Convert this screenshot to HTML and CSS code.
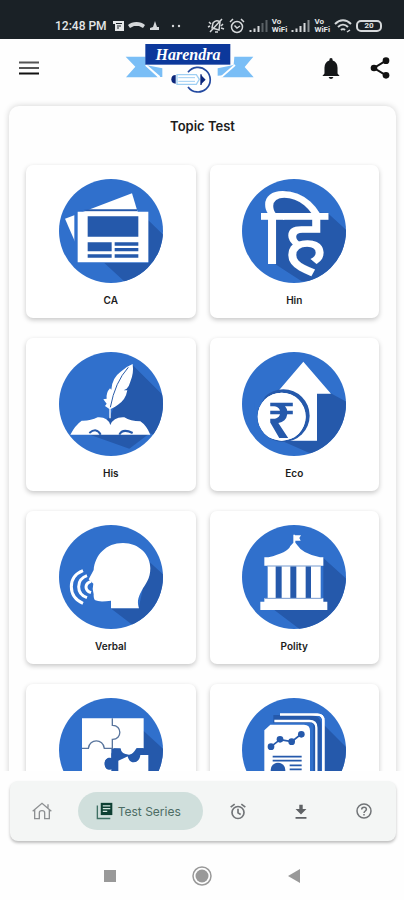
FILE: index.html
```html
<!DOCTYPE html>
<html lang="en">
<head>
<meta charset="utf-8">
<meta name="viewport" content="width=device-width, initial-scale=1">
<title>Topic Test</title>
<link rel="stylesheet" href="styles.css">
</head>
<body>
<div class="statusbar">
  <span class="time">12:48 PM</span>
  <svg class="status-left" viewBox="0 0 74 14" width="74" height="14" aria-hidden="true">
    <path d="M1 2h11v10H3V5H1z" fill="#e4e6e7"/><path d="M4 4.500h6M5 7h4M5 9h2" stroke="#1a2126" stroke-width="1"/>
    <path d="M16 6c4-4 13-4 17 0l-2 3-4-2h-5l-4 2z" fill="#d5d8da"/>
    <path d="M43 2l2 6h2v3h-9V9l3-1z" fill="#d5d8da"/>
    <circle cx="61" cy="7" r="1.200" fill="#d5d8da"/><circle cx="67" cy="7" r="1.200" fill="#d5d8da"/>
  </svg>
  <div class="status-right">
    <svg viewBox="0 0 18 16" width="18" height="16" aria-hidden="true" fill="none" stroke="#d5d8da" stroke-width="1.500"><path d="M5 10l1-5q3-4 7-1l-1 8zM8 14h3M2 4l2 2M1 9l2-1M16 6l-2 2M17 11l-3-1M3 14L15 1"/></svg>
    <svg viewBox="0 0 16 16" width="16" height="16" aria-hidden="true" fill="none" stroke="#d5d8da" stroke-width="1.500"><circle cx="8" cy="9" r="5.500"/><path d="M1 4l3-3M15 4l-3-3M5.500 7.500L8 10l3-2"/></svg>
    <svg viewBox="0 0 19 14" width="19" height="14" aria-hidden="true" stroke="#d5d8da" stroke-width="2"><path d="M1.500 13v-2M5.500 13V9.500M9.500 13V7"/><path d="M13.500 13V4M17.500 13V1" stroke="#5b6266"/></svg>
    <span class="vo">Vo<br>WiFi</span>
    <svg viewBox="0 0 19 14" width="19" height="14" aria-hidden="true" stroke="#d5d8da" stroke-width="2"><path d="M1.500 13v-2M5.500 13V9.500M9.500 13V7M13.500 13V4"/><path d="M17.500 13V1" stroke="#8b9093"/></svg>
    <span class="vo">Vo<br>WiFi</span>
    <svg viewBox="0 0 18 14" width="18" height="14" aria-hidden="true" fill="none" stroke="#d5d8da" stroke-width="2"><path d="M1 5c5-5 11-5 16 0M4 8c3-3 7-3 10 0M7 11c1-1 3-1 4 0"/><path d="M13 13l3-2" stroke-width="1.500"/></svg>
    <span class="battery">20</span>
  </div>
</div>

<header class="appbar">
  <button class="icon-btn" aria-label="Menu">
    <svg viewBox="0 0 20 14" width="20" height="14"><path d="M0 1.500h20M0 7h20" stroke="#555" stroke-width="2"/><path d="M0 12.500h20" stroke="#111" stroke-width="2"/></svg>
  </button>
  <div class="logo">
    <svg viewBox="372 134 390 150" width="130" height="50" aria-hidden="true">
      <path d="M374 175h60v25l50 10v26h-10l-40-34 36 35h-95l28-32z" fill="#7abef6"/>
      <path d="M434 200l42 36" stroke="#fff" stroke-width="5"/>
      <path d="M757 175h-57l-2 25-48 10v22l20-1-9 6h97l-27-31z" fill="#7abef6"/>
      <path d="M702 200l-41 36" stroke="#fff" stroke-width="5"/>
      <rect x="433" y="137" width="255" height="62" fill="#0c389b"/>
      <path d="M561 222a37 37 0 1 1 0 44" fill="none" stroke="#2349a0" stroke-width="5"/>
      <path d="M598 228h4v32h-4z" fill="#0b267c"/>
      <path d="M600 230l14 14-14 14z" fill="#0b267c"/>
      <path d="M524 230q-13 0-13 13t13 13z" fill="#0b267c"/>
      <path d="M528 229h58l9 14-9 15h-58z" fill="#fff" stroke="#9fcff3" stroke-width="4"/>
      <path d="M532 238h50M532 249h50" stroke="#9fcff3" stroke-width="3"/>
      <text class="logo-text" x="561" y="184" text-anchor="middle">Harendra</text>
    </svg>
  </div>
  <div class="actions">
    <button class="icon-btn" aria-label="Notifications">
      <svg viewBox="360 173 52 64" width="18" height="22"><path d="M386 176q5 0 5 7 14 5 14 21v17l6 7h-50l6-7v-17q0-16 14-21 0-7 5-7zM379 231h14q-2 6-7 6t-7-6z" fill="#151719"/></svg>
    </button>
    <button class="icon-btn" aria-label="Share">
      <svg viewBox="504 172 60 66" width="20" height="22"><path d="M552 183l-36 22 36 22" fill="none" stroke="#111" stroke-width="6"/><g fill="#111"><circle cx="552" cy="183" r="10"/><circle cx="516" cy="205" r="10"/><circle cx="552" cy="227" r="10"/></g></svg>
    </button>
  </div>
</header>

<main class="content">
  <section class="panel">
    <h1>Topic Test</h1>
    <div class="grid">
      <a class="card" href="#ca">
        <svg class="pic" viewBox="176 236 312 312" aria-hidden="true">
          <path class="shade" d="M444 360l50 48v150H388l-76-70h132z"/>
          <path d="M194 355l201-76 18 60-187 90z" fill="#fff"/>
          <path d="M262 327h148v6H230z" fill="#2559ab"/>
          <path d="M226 333h8v100h-12v-88l-4-3 54-17z" fill="#3070cc"/>
          <path d="M232 334h212v152H232z" fill="#fff"/>
          <path d="M262 348h152v61H262zM262 426h72v27H262zM262 462h72v10H262zM343 426h71v10h-71zM343 443h71v10h-71zM343 462h71v10h-71z" fill="#2559ab"/>
        </svg>
        <span>CA</span>
      </a>
      <a class="card" href="#hin">
        <svg class="pic" viewBox="121 236 312 312" aria-hidden="true">
          <path class="shade" d="M205 335l10-50 40-15 85 66 38 2 60 55v150H300l-80-52z"/>
          <text class="hindi" x="277" y="492" text-anchor="middle" lang="hi">हि</text>
        </svg>
        <span>Hin</span>
      </a>
      <a class="card" href="#his">
        <svg class="pic" viewBox="117 66 312 312" aria-hidden="true">
          <path class="shade" d="M337 104l100 100v130l-47-25-62 47-118-42 60-55z"/>
          <path d="M268 265q0-15 0-28l-13-9 5-7-10-13 10-2q-2-18 10-31l4 4q2-35 27-53 16-16 37-24 4 28-7 53-4 15-11 21l-9 5 11 0q-5 29-28 43-10 8-22 13l0 28z" fill="#fff"/>
          <path d="M271 232q14-76 54-120" fill="none" stroke="#2a5ca9" stroke-width="3"/>
          <path d="M151 314q14-28 34-42 26 1 48-10 30-2 38 23 10-25 42-23 18 12 48 12 18 12 30 40z" fill="#fff"/>
          <path d="M208 309q22-18 34 5M298 314q10-20 40-5" fill="none" stroke="#2559ab" stroke-width="6"/>
        </svg>
        <span>His</span>
      </a>
      <a class="card" href="#eco">
        <svg class="pic" viewBox="121 66 312 312" aria-hidden="true">
          <path class="shade" d="M346 190h41l60 32v150H330l-90-40h106z"/>
          <path d="M305 95l83 96h-42v141H230V183z" fill="#fff"/>
          <circle cx="245" cy="257" r="79" fill="#2559ab"/><circle cx="240" cy="260" r="72" fill="#fff"/>
          <path d="M160 200h30l-22 40v40l20 36-30-6z" fill="#3070cc"/>
          <circle cx="240" cy="260" r="72" fill="#fff"/>
          <text class="rupee" x="239" y="323" text-anchor="middle">₹</text>
        </svg>
        <span>Eco</span>
      </a>
      <a class="card" href="#verbal">
        <svg class="pic" viewBox="117 61 312 312" aria-hidden="true">
          <path class="shade" d="M386 170l50 45v160h-80l-84-64h84z"/>
          <path d="M309 115c48 0 82 35 82 76 0 32-14 46-26 67-13 23-13 36-8 53h-84v-23q-35 5-47-1-6-4-5-18l-3-16 2-16-14-13 15-28c4-45 37-81 88-81z" fill="#fff"/>
          <g fill="none" stroke="#fff" stroke-width="9"><path d="M189 198q-35 14-35 48t35 50M201 213q-25 9-25 33t25 33M213 230q-15 5-15 17t15 17"/></g>
        </svg>
        <span>Verbal</span>
      </a>
      <a class="card" href="#polity">
        <svg class="pic" viewBox="121 61 312 312" aria-hidden="true">
          <path class="shade" d="M365 160l75 68v150H300l-82-62h147z"/>
          <path d="M188 183v-25h12q58-14 66-34l9-10V90h5v2h18l-5 8 4 8h-16v6l8 10q12 22 66 34h10v25h-8v98h8v10h12v25H176v-25h12v-10h10v-98z" fill="#fff"/>
          <path d="M222 185h18v95h-18zM266 185h18v95h-18zM312 185h16v95h-16z" fill="#2559ab"/>
          <path d="M197 184h160M190 281h172" stroke="#779bcf" stroke-width="3"/>
        </svg>
        <span>Polity</span>
      </a>
      <a class="card" href="#reasoning" aria-label="Reasoning">
        <svg class="pic" viewBox="176 71 312 312" aria-hidden="true">
          <path class="shade" d="M430 170l60 55v160H246V290l84-70z"/>
          <path d="M245 132h185v90h-20c0 25-45 25-49 2l-28-2v30c-10-5-20 4-20 16s8 22 20 16v99h-88z" fill="#fff"/>
          <path d="M354 388v-96-33l32-15c2 28 32 24 34-2h24v146z" fill="#fff"/>
          <path d="M336 132v21c30-1 30 43 0 42v27h-24c-3-30-45-30-48 0h-19" fill="none" stroke="#59759d" stroke-width="4"/>
          <path d="M333 238l8-16h20v17l-16 12v20c-2 20-32 19-32-3 0-14 9-18 20-17zM363 239c15 8 33 6 45-17h21v19h-12c-4 30-32 30-36 0z" fill="#2559ab"/>
        </svg>
      </a>
      <a class="card" href="#data" aria-label="Data">
        <svg class="pic" viewBox="121 71 312 312" aria-hidden="true">
          <path class="shade" d="M365 150l75 75v160h-75z"/>
          <path d="M235 121h112q18 0 18 18v250" fill="none" stroke="#fff" stroke-width="7"/>
          <path d="M215 134h110q22 0 22 20v230" fill="none" stroke="#2559ab" stroke-width="24"/>
          <path d="M235 121h112q18 0 18 18v250M218 140h105q21 0 21 20v230" fill="none" stroke="#fff" stroke-width="7"/>
          <path d="M188 388V168l18-17h101q18 0 18 18v219z" fill="#fff"/>
          <path d="M208 217l27-21 35 6 29-23" fill="none" stroke="#2559ab" stroke-width="5"/>
          <g fill="#2559ab"><circle cx="208" cy="217" r="10"/><circle cx="235" cy="195" r="10"/><circle cx="270" cy="202" r="10"/><circle cx="299" cy="180" r="10"/><circle cx="229" cy="287" r="22"/></g>
          <path d="M213 247h87M213 259h87M264 273h36M264 285h36" stroke="#2559ab" stroke-width="5"/>
        </svg>
      </a>
    </div>
  </section>
</main>

<nav class="tabbar" aria-label="Main">
  <button class="tab" aria-label="Home">
    <svg viewBox="96 384 60 52" width="20" height="18" fill="none" stroke="#8d9092" stroke-width="4"><path d="M98 411l28-24 28 24M104 407v26h14v-18q0-6 8-6t8 6v18h14v-26M144 400v-10"/></svg>
  </button>
  <button class="tab active" aria-current="page">
    <svg viewBox="286 384 50 52" width="17" height="18" aria-hidden="true"><path d="M300 386h34v36h-34z" fill="#0d3f32"/><path d="M290 394v38h38" fill="none" stroke="#3f7064" stroke-width="4"/><path d="M306 395h22M306 403h22M306 411h13" stroke="#d2e4de" stroke-width="4"/></svg>
    <span>Test Series</span>
  </button>
  <button class="tab" aria-label="Reminders">
    <svg viewBox="86 384 48 50" width="16" height="17" fill="none" stroke="#717477" stroke-width="5"><circle cx="110" cy="412" r="18"/><path d="M88 396l12-9M132 396l-12-9M110 401v12l8 5"/></svg>
  </button>
  <button class="tab" aria-label="Downloads">
    <svg viewBox="280 386 34 44" width="12" height="15" fill="#5f6265"><path d="M292 388h10v13h11l-16 16-16-16h11zM281 424h32v5h-32z"/></svg>
  </button>
  <button class="tab" aria-label="Help">
    <svg viewBox="0 0 16 16" width="16" height="16" fill="none" stroke="#717477" stroke-width="1.500"><circle cx="8" cy="8" r="7"/><path d="M5.700 6.500c0-3.200 4.700-3 4.700-.2C10.400 8 8 8 8 10M8 11v1.500"/></svg>
  </button>
</nav>

<div class="sysnav">
  <button aria-label="Recent apps"><svg viewBox="0 0 20 20" width="20" height="20"><path d="M4 4h12v12H4z" fill="#999"/></svg></button>
  <button aria-label="Device home"><svg viewBox="0 0 20 20" width="20" height="20"><circle cx="10" cy="10" r="9" fill="none" stroke="#999" stroke-width="1.500"/><circle cx="10" cy="10" r="6.500" fill="#999"/></svg></button>
  <button aria-label="Back"><svg viewBox="0 0 20 20" width="20" height="20"><path d="M16 3v14L4 10z" fill="#999"/></svg></button>
</div>
</body>
</html>
```
FILE: styles.css
```css
* { box-sizing: border-box; }

body {
  margin: 0;
  height: 100vh;
  display: flex;
  flex-direction: column;
  background: #fefefe;
  color: #1c1c1c;
  font-family: Inter, "Open Sans", sans-serif;
}

button {
  border: 0;
  padding: 0;
  background: none;
  font: inherit;
  color: inherit;
  display: flex;
  align-items: center;
  justify-content: center;
}

svg { display: block; flex: none; }

.statusbar {
  flex: none;
  display: flex;
  align-items: center;
  padding: 12px 22px 0 55px;
  height: 39px;
  background: #1a2126;
  color: #e4e6e7;
  font-family: Roboto, sans-serif;
}

.time { font-size: 12px; font-weight: 500; white-space: nowrap; }
.status-left { margin-left: 5px; }

.status-right {
  margin-left: auto;
  display: flex;
  align-items: center;
  gap: 4px;
}

.vo { font-size: 8px; line-height: 8px; font-weight: 700; }

.battery {
  width: 26px;
  height: 12px;
  border: 2px solid #d5d8da;
  border-radius: 5px;
  font-size: 8px;
  line-height: 8px;
  font-weight: 700;
  text-align: center;
}

.appbar {
  flex: none;
  display: grid;
  grid-template-columns: 1fr auto 1fr;
  align-items: center;
  height: 58px;
  padding: 0 14px 0 19px;
}

.appbar > .icon-btn { justify-self: start; }
.logo { margin-right: 36px; margin-left: 6px; }

.logo-text {
  font: italic 700 48px "Liberation Serif", serif;
  fill: #fff;
}

.actions { display: flex; justify-content: flex-end; gap: 30px; }

.content {
  flex: 1;
  min-height: 0;
  overflow: hidden;
  padding: 9px 8px 0 9px;
}

.panel {
  padding: 10px 17px 20px;
  border-radius: 10px;
  background: #fefefe;
  box-shadow: 0 0 6px rgba(0, 0, 0, 0.18);
}

h1 {
  margin: 0 0 29px;
  font-size: 13px;
  line-height: 20px;
  font-weight: 600;
  text-align: center;
}

.grid {
  display: grid;
  grid-template-columns: 1fr 1fr;
  gap: 20px 14px;
}

.card {
  display: flex;
  flex-direction: column;
  align-items: center;
  gap: 9px;
  padding: 14px 0 10px;
  border-radius: 7px;
  background: #fff;
  box-shadow: 0 2px 5px rgba(0, 0, 0, 0.22);
  color: #1c1c1c;
  text-decoration: none;
  font-size: 10px;
  line-height: 16px;
  font-weight: 600;
}

.pic {
  width: 104px;
  height: 104px;
  border-radius: 50%;
  background: #3070cc;
}

.shade { fill: #2559ab; }

.hindi {
  font: 500 245px "Noto Sans", "Noto Sans Devanagari", sans-serif;
  fill: #fff;
}

.rupee {
  font: 700 150px "Noto Sans", "DejaVu Sans", sans-serif;
  fill: #2559ab;
}

.tabbar {
  flex: none;
  display: flex;
  align-items: center;
  height: 60px;
  margin: 10px 8px 0 10px;
  padding: 0 1px;
  border-radius: 8px;
  background: #f4f6f5;
  box-shadow: 0 2px 3px rgba(0, 0, 0, 0.25);
}

.tab { flex: 1; height: 38px; }

.tab.active {
  flex: none;
  gap: 5px;
  margin: 0 4px;
  padding: 0 22px 0 18px;
  border-radius: 19px;
  background: #d0dfdc;
  color: #4c6c64;
  font-size: 12px;
}

.sysnav {
  flex: none;
  display: flex;
  align-items: center;
  justify-content: center;
  gap: 72px;
  height: 59px;
  padding-top: 10px;
}
```
